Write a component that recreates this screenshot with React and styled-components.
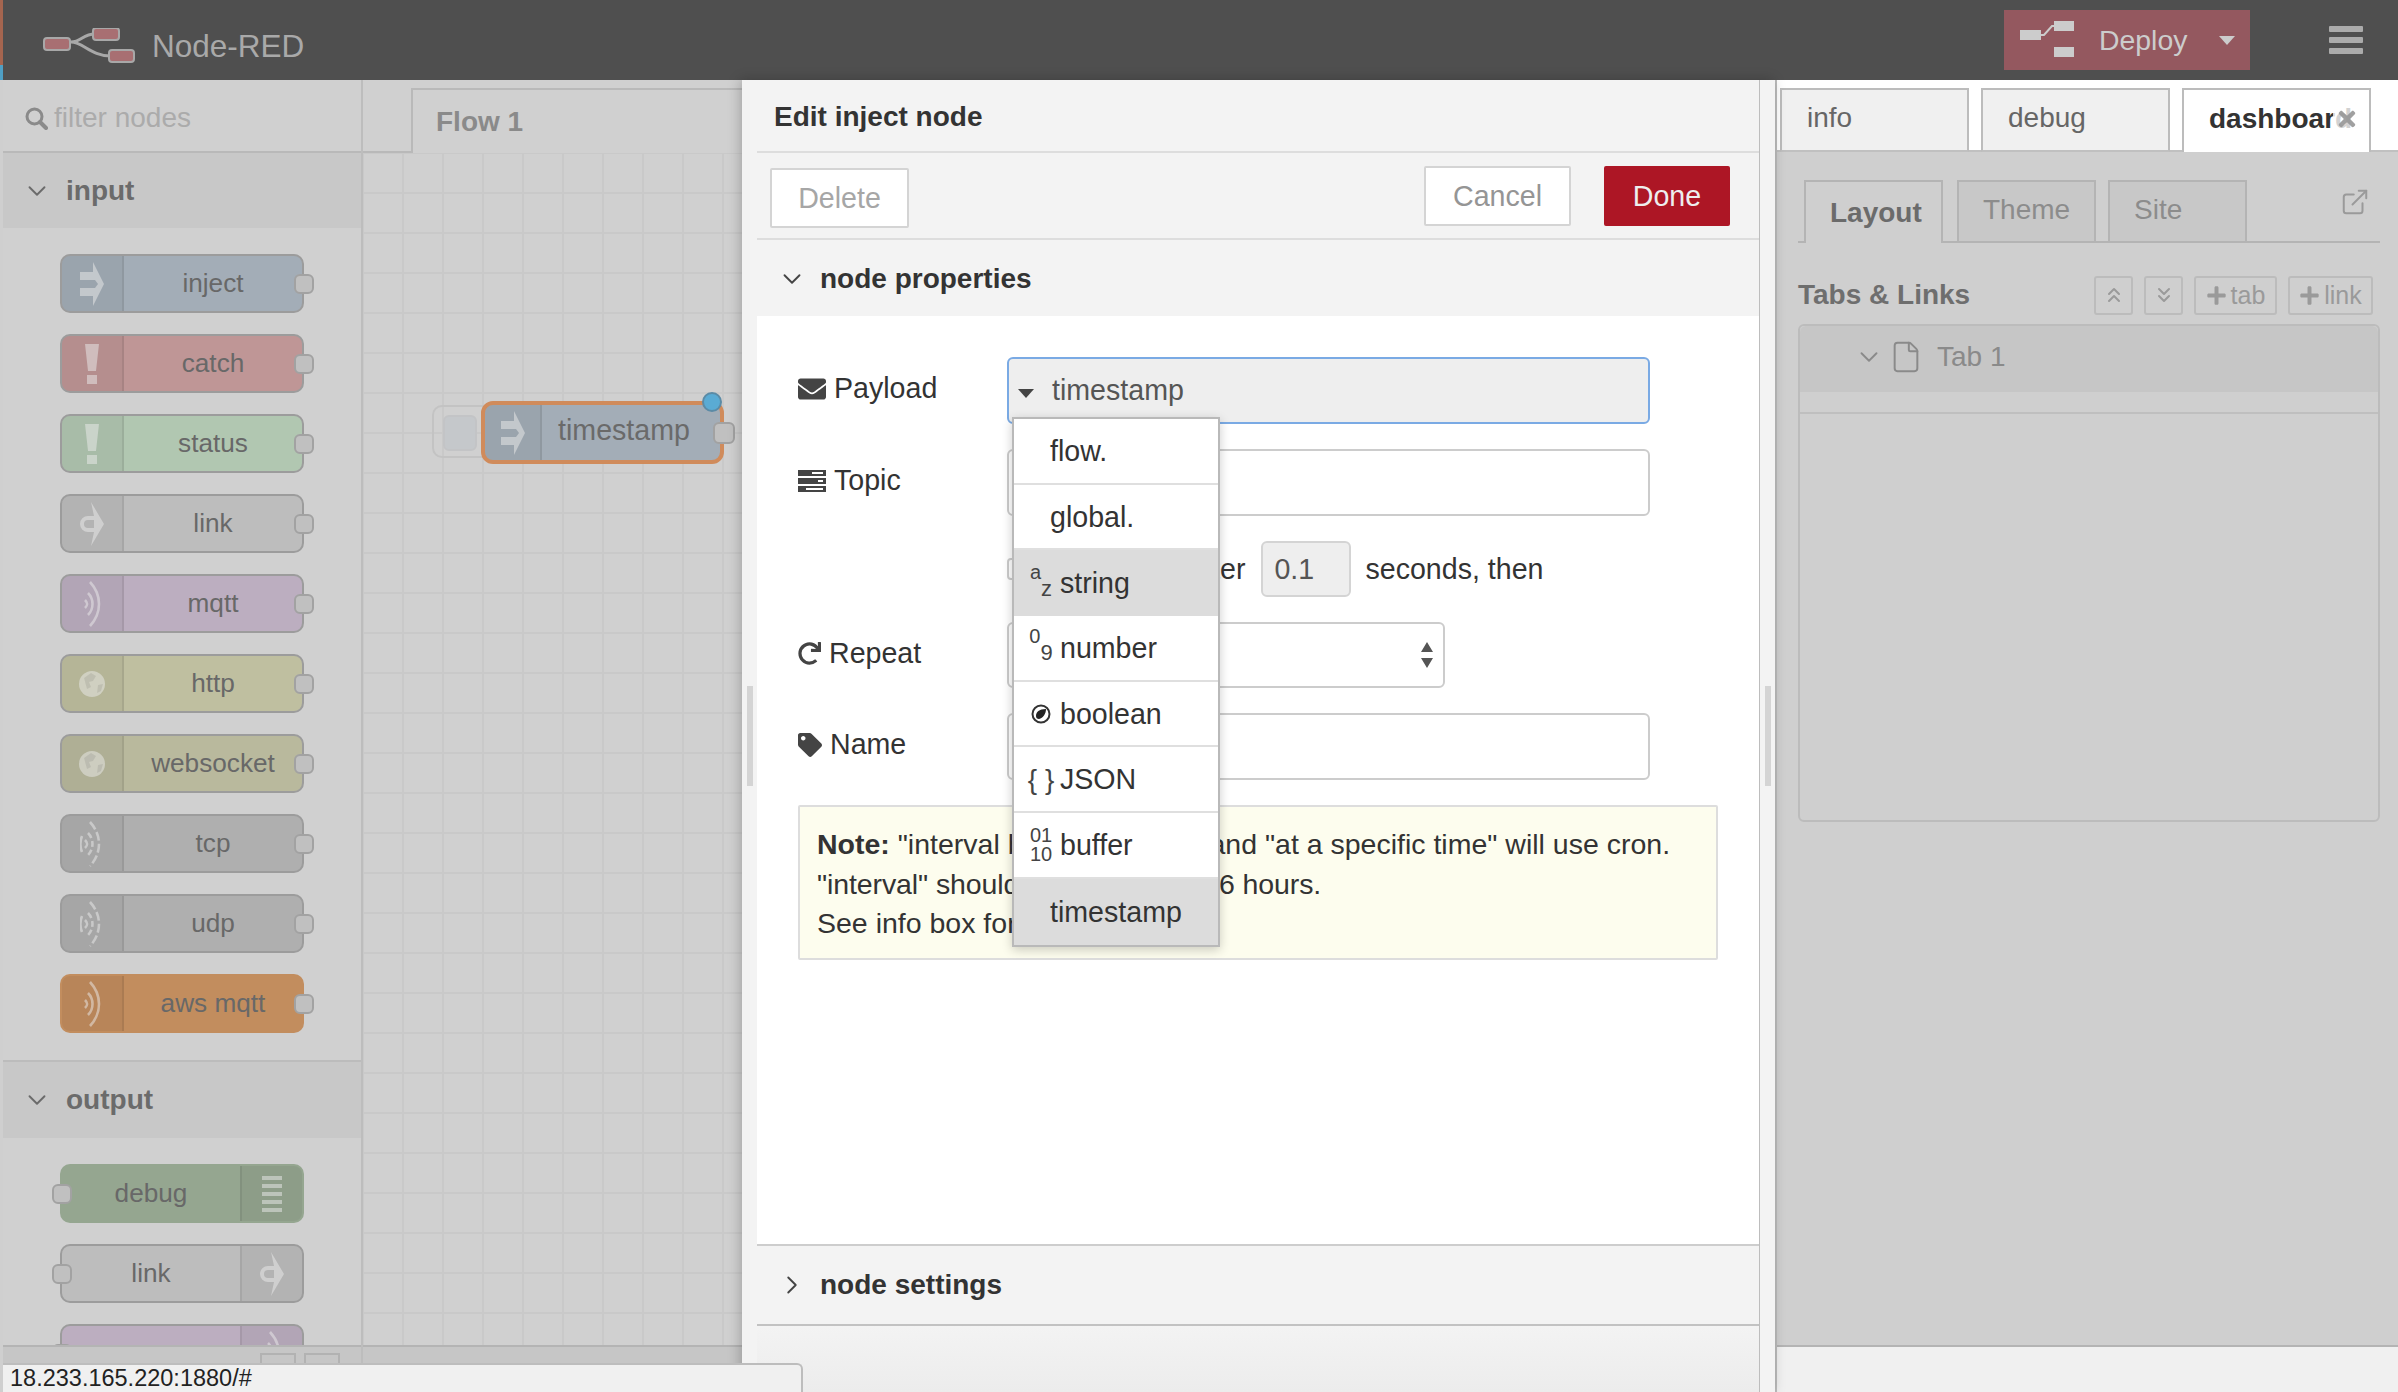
import React from 'react';
import styled, { createGlobalStyle } from 'styled-components';
import { ChevronDown, ChevronRight, ChevronsUp, ChevronsDown, ExternalLink, File } from 'lucide-react';
import { FaEnvelope, FaRedo, FaTag, FaPlus, FaTimes } from 'react-icons/fa';

const GlobalStyle = createGlobalStyle`
  html, body {
    margin: 0;
    padding: 0;
    height: 100%;
    overflow: hidden;
    background: #f3f3f3;
    font-family: "Liberation Sans", Arial, sans-serif;
  }
  * { box-sizing: border-box; }
`;

const Page = styled.div`
  position: relative;
  display: flex;
  width: 2398px;
  height: 1392px;
  overflow: hidden;
`;

const EdgeStrip = styled.div`
  flex: none;
  width: 3px;
  background: linear-gradient(#a5654f 0 65px, #4f9fc4 65px 80px, #cfcfcf 80px);
`;

const Main = styled.div`
  flex: 1;
  display: flex;
  flex-direction: column;
  min-width: 0;
`;

/* top bar */
const Header = styled.header`
  flex: none;
  height: 80px;
  display: flex;
  align-items: center;
  background: #4f4f4f;
  padding-left: 40px;
`;

const BrandGroup = styled.div`
  display: flex;
  align-items: center;
  margin-top: 12px;
`;

const Brand = styled.span`
  margin-left: 17px;
  font-size: 31.5px;
  color: #a9a9a9;
`;

const Deploy = styled.div`
  margin-left: auto;
  width: 246px;
  height: 60px;
  display: flex;
  align-items: center;
  padding-left: 16px;
  background: #94585f;
  color: #cccccc;
  font-size: 28.4px;
`;

const DeployLabel = styled.span`
  margin-left: 23px;
`;

const Caret = styled.span`
  margin-left: 32px;
  width: 0;
  height: 0;
  border-left: 8px solid transparent;
  border-right: 8px solid transparent;
  border-top: 9px solid #cccccc;
`;

const Burger = styled.div`
  margin: 0 35px 0 79px;
  width: 34px;
  display: flex;
  flex-direction: column;
  gap: 5px;
`;

const BurgerBar = styled.span`
  height: 6px;
  border-radius: 1px;
  background: #ababab;
`;

const Body = styled.div`
  flex: 1;
  display: flex;
  min-height: 0;
`;

/* left palette */
const Palette = styled.aside`
  flex: none;
  width: 360px;
  display: flex;
  flex-direction: column;
  background: #d0d0d0;
  border-right: 2px solid #bdbdbd;
`;

const FilterRow = styled.div`
  flex: none;
  height: 73px;
  display: flex;
  align-items: center;
  gap: 6px;
  padding: 5px 0 0 22px;
  border-bottom: 2px solid #b9b9b9;
  font-size: 28px;
  color: #ababab;
`;

const PaletteScroll = styled.div`
  flex: 1;
  min-height: 0;
  overflow: hidden;
`;

const CategoryHead = styled.div`
  height: 75px;
  display: flex;
  align-items: center;
  padding-left: 19px;
  gap: 14px;
  background: #c8c8c8;
  color: #6b6b6b;
  font-size: 28px;
  font-weight: bold;
  ${(p) => p.$divided && 'height: 78px; border-top: 2px solid #bcbcbc;'}
`;

const NodeList = styled.div`
  display: flex;
  flex-direction: column;
  gap: 21px;
  padding: 26px 0 27px 57px;
`;

const PaletteNode = styled.div`
  position: relative;
  width: 244px;
  height: 59px;
  display: flex;
  flex-direction: ${(p) => (p.$output ? 'row-reverse' : 'row')};
  border: 2px solid #9c9c9c;
  border-radius: 10px;
  background: ${(p) => p.$bg};
  font-size: 26.2px;
  color: #686868;
  ${(p) => p.$solid && 'border-color: transparent;'}
`;

const IconPart = styled.div`
  flex: none;
  width: 62px;
  display: flex;
  align-items: center;
  justify-content: center;
  background: rgba(0, 0, 0, 0.05);
  border-${(p) => (p.$output ? 'left' : 'right')}: 2px solid rgba(0, 0, 0, 0.08);
  border-radius: ${(p) => (p.$output ? '0 8px 8px 0' : '8px 0 0 8px')};
`;

const NodeLabel = styled.div`
  flex: 1;
  display: flex;
  align-items: center;
  justify-content: center;
`;

const Port = styled.span`
  position: absolute;
  top: 18px;
  ${(p) => (p.$left ? 'left: -10px;' : 'right: -12px;')}
  width: 20px;
  height: 20px;
  border: 2px solid #a2a2a2;
  border-radius: 6px;
  background: #c0c0c0;
`;

const PaletteFooter = styled.div`
  flex: none;
  height: 47px;
  display: flex;
  gap: 8px;
  padding: 6px 0 0 257px;
  background: #c6c6c6;
  border-top: 2px solid #b4b4b4;
`;

const FooterButton = styled.span`
  width: 36px;
  height: 12px;
  border: 2px solid #b2b2b2;
  border-bottom: none;
`;

/* workspace */
const Workspace = styled.section`
  flex: none;
  width: 379px;
  display: flex;
  flex-direction: column;
  background: #d0d0d0;
`;

const TabStrip = styled.div`
  flex: none;
  height: 73px;
  padding: 8px 0 0 48px;
  border-bottom: 2px solid #b9b9b9;
`;

const FlowTab = styled.div`
  height: 65px;
  display: flex;
  align-items: center;
  padding-left: 23px;
  border: 2px solid #b9b9b9;
  border-right: none;
  border-bottom: none;
  margin-bottom: -2px;
  background: #d0d0d0;
  font-size: 28px;
  font-weight: bold;
  color: #8a8a8a;
`;

const Canvas = styled.div`
  position: relative;
  flex: 1;
  min-height: 0;
  background-color: #d0d0d0;
  background-image: linear-gradient(#c9c9c9 2px, transparent 2px),
    linear-gradient(90deg, #c9c9c9 2px, transparent 2px);
  background-size: 40px 40px;
  background-position: 39px 39px;
`;

const WorkspaceFooter = styled.div`
  flex: none;
  height: 47px;
  background: #c6c6c6;
  border-top: 2px solid #b4b4b4;
`;

const GhostNode = styled.div`
  position: absolute;
  left: 69px;
  top: 252px;
  width: 70px;
  height: 53px;
  padding: 8px 0 0 9px;
  border: 2px solid #c3c3c3;
  border-radius: 10px 0 0 10px;
`;

const GhostButton = styled.div`
  width: 34px;
  height: 36px;
  border: 2px solid #c3c4c6;
  border-radius: 6px;
  background: #c5c8cb;
`;

const FlowNode = styled.div`
  position: absolute;
  left: 118px;
  top: 248px;
  width: 243px;
  height: 63px;
  display: flex;
  border: 4px solid #d08b5b;
  border-radius: 12px;
  background: #a3adb7;
  font-size: 28.6px;
  color: #6a6a6a;
`;

const FlowIcon = styled(IconPart)`
  width: 57px;
`;

const FlowLabel = styled(NodeLabel)`
  padding: 0 14px 4px 0;
`;

const FlowPort = styled(Port)`
  top: 17px;
  right: -15px;
  width: 22px;
  height: 22px;
`;

const ChangedDot = styled.span`
  position: absolute;
  top: -13px;
  right: -2px;
  width: 20px;
  height: 20px;
  border: 2px solid #5b8ba6;
  border-radius: 50%;
  background: #5aabd4;
`;

/* edit tray */
const Tray = styled.section`
  position: relative;
  z-index: 2;
  flex: none;
  width: 1033px;
  display: flex;
  background: #f3f3f3;
  box-shadow: -2px 0 12px rgba(0, 0, 0, 0.22);
`;

const GripStrip = styled.div`
  flex: none;
  width: ${(p) => p.$w}px;
  display: flex;
  align-items: center;
  justify-content: center;
  background: #f3f3f3;
`;

const Grip = styled.span`
  width: 6px;
  height: 100px;
  background: #d4d4d4;
`;

const TrayContent = styled.div`
  flex: 1;
  display: flex;
  flex-direction: column;
  min-width: 0;
  border-right: 1px solid #bdbdbd;
  color: #333333;
  font-size: 28.6px;
`;

const TrayTitle = styled.div`
  flex: none;
  height: 73px;
  display: flex;
  align-items: center;
  padding: 2px 0 0 17px;
  border-bottom: 2px solid #dddddd;
  font-size: 28px;
  font-weight: bold;
`;

const TrayBar = styled.div`
  flex: none;
  height: 87px;
  display: flex;
  align-items: center;
  padding: 0 29px 0 13px;
  border-bottom: 2px solid #dddddd;
`;

const Spacer = styled.div`
  flex: 1;
`;

const TrayButton = styled.div`
  width: ${(p) => p.$w}px;
  height: 60px;
  display: flex;
  align-items: center;
  justify-content: center;
  margin-left: ${(p) => p.$ml || 0}px;
  margin-top: ${(p) => p.$mt || 0}px;
  padding-top: 2px;
  border: 2px solid ${(p) => (p.$primary ? '#ad1625' : '#d4d4d4')};
  border-radius: 2px;
  background: ${(p) => (p.$primary ? '#ad1625' : '#ffffff')};
  color: ${(p) => (p.$primary ? '#eeeeee' : p.$faint ? '#a6a6a6' : '#959595')};
`;

const Section = styled.div`
  flex: none;
  height: ${(p) => p.$h}px;
  display: flex;
  align-items: center;
  gap: 13px;
  padding-left: 20px;
  padding-top: ${(p) => (p.$bottom ? 0 : 2)}px;
  font-size: 28px;
  font-weight: bold;
  ${(p) => p.$bottom && 'border-top: 2px solid #cdcdcd; border-bottom: 2px solid #c2c2c2;'}
`;

const Form = styled.div`
  flex: 1;
  display: flex;
  flex-direction: column;
  gap: 25px;
  padding: 41px 0 0 41px;
  background: #ffffff;
`;

const Row = styled.div`
  display: flex;
  align-items: center;
`;

const RowLabel = styled.label`
  flex: none;
  width: 209px;
  display: flex;
  align-items: center;
  gap: 8px;
  padding-bottom: 4px;
`;

const FieldWrap = styled.div`
  position: relative;
  z-index: 3;
`;

const TypedField = styled.div`
  width: 643px;
  height: 67px;
  display: flex;
  align-items: center;
  padding: 0 0 0 9px;
  gap: 18px;
  border: 2px solid #7aaae4;
  border-radius: 6px;
  background: #eeeeee;
  color: #555555;
`;

const FieldCaret = styled.span`
  width: 0;
  height: 0;
  margin-top: 6px;
  border-left: 8px solid transparent;
  border-right: 8px solid transparent;
  border-top: 9px solid #444444;
`;

const TextField = styled.input`
  width: 643px;
  height: 67px;
  padding: 0 14px;
  border: 2px solid #cccccc;
  border-radius: 6px;
  outline: none;
  background: #ffffff;
  font: inherit;
  color: #555555;
`;

const OnceText = styled.label`
  display: flex;
  align-items: center;
  gap: 13px;
`;

const Check = styled.span`
  width: 22px;
  height: 22px;
  border: 2px solid #cccccc;
  border-radius: 4px;
  background: #ffffff;
`;

const ShortField = styled.input`
  width: 90px;
  height: 56px;
  margin: 0 14px 0 16px;
  padding: 0 11px;
  border: 2px solid #d4d4d4;
  border-radius: 6px;
  outline: none;
  background: #eeeeee;
  font: inherit;
  color: #555555;
`;

const SelectBox = styled.div`
  width: 438px;
  height: 66px;
  display: flex;
  align-items: center;
  justify-content: space-between;
  padding: 0 9px 0 14px;
  border: 2px solid #cccccc;
  border-radius: 6px;
  background: #ffffff;
  color: #555555;
`;

const Note = styled.div`
  width: 920px;
  height: 155px;
  padding: 18px 17px 0;
  border: 2px solid #dddddd;
  border-radius: 2px;
  background: #fdfdee;
  font-size: 28.5px;
  line-height: 39.5px;
`;

const NoteTight = styled.span`
  letter-spacing: -0.1px;
`;

const TrayFooter = styled.div`
  flex: none;
  height: 66px;
  background: linear-gradient(#f3f3f3, #ececec);
`;

/* type menu */
const TypeMenu = styled.div`
  position: absolute;
  z-index: 5;
  left: 5px;
  top: 60px;
  width: 208px;
  border: 2px solid #b9b9b9;
  background: #ffffff;
  box-shadow: 0 3px 10px rgba(0, 0, 0, 0.2);
`;

const MenuItem = styled.div`
  height: 65.7px;
  display: flex;
  align-items: center;
  gap: 8px;
  padding-top: 1px;
  padding-left: ${(p) => (p.$plain ? 36 : 16)}px;
  background: ${(p) => (p.$active ? '#dcdcdc' : '#ffffff')};
  border-bottom: ${(p) => (p.$active ? 'none' : '2px solid #dfdfdf')};
  color: #333333;
  &:last-child { border-bottom: none; }
`;

const TypeGlyph = styled.span`
  flex: none;
  width: 22px;
  display: flex;
  flex-direction: ${(p) => (p.$stack ? 'column' : 'row')};
  align-items: center;
  justify-content: center;
  white-space: nowrap;
  font-size: ${(p) => p.$size || 18}px;
  line-height: ${(p) => (p.$stack ? 0.95 : 1)};
  color: #444444;
`;

const Sup = styled.span`
  align-self: flex-start;
  margin-top: -6px;
  font-size: 20px;
`;

const Sub = styled.span`
  align-self: flex-end;
  margin-top: 10px;
  font-size: 22px;
`;

/* right sidebar */
const Sidebar = styled.aside`
  flex: 1;
  min-width: 0;
  display: flex;
  flex-direction: column;
  background: #ffffff;
  border-left: 2px solid #bcbcbc;
  font-size: 28px;
`;

const SideTabs = styled.div`
  flex: none;
  height: 72px;
  display: flex;
  align-items: flex-end;
  gap: 12px;
  padding-left: 3px;
  border-bottom: 2px solid #c0c0c0;
`;

const SideTab = styled.div`
  position: relative;
  width: 189px;
  height: 64px;
  display: flex;
  align-items: center;
  padding: 0 0 4px 25px;
  margin-bottom: -2px;
  overflow: hidden;
  white-space: nowrap;
  border: 2px solid #bcbcbc;
  border-bottom: ${(p) => (p.$active ? 'none' : '2px solid #c0c0c0')};
  background: ${(p) => (p.$active ? '#ffffff' : '#f0f0f0')};
  color: ${(p) => (p.$active ? '#333333' : '#666666')};
  font-weight: ${(p) => (p.$active ? 'bold' : 'normal')};
`;

const TabClose = styled.span`
  position: absolute;
  right: 0;
  top: 0;
  bottom: 0;
  width: 36px;
  display: flex;
  align-items: center;
  padding: 0 0 4px 2px;
  background: rgba(255, 255, 255, 0.78);
  color: rgba(150, 150, 150, 0.9);
  font-size: 24px;
`;

const SidePanel = styled.div`
  flex: 1;
  min-height: 0;
  padding: 28px 18px 0 21px;
  background: #cfcfcf;
`;

const SubTabs = styled.div`
  height: 63px;
  display: flex;
  align-items: flex-end;
  padding-left: 6px;
  border-bottom: 2px solid #b4b4b4;
`;

const SubTab = styled.div`
  width: 139px;
  height: 63px;
  margin-right: ${(p) => p.$mr || 0}px;
  margin-bottom: -2px;
  display: flex;
  align-items: center;
  padding: 0 0 ${(p) => (p.$active ? 0 : 4)}px 24px;
  border: 2px solid #b4b4b4;
  border-bottom: ${(p) => (p.$active ? 'none' : '2px solid #b4b4b4')};
  background: ${(p) => (p.$active ? '#cfcfcf' : '#c8c8c8')};
  color: ${(p) => (p.$active ? '#6b6b6b' : '#8c8c8c')};
  font-weight: ${(p) => (p.$active ? 'bold' : 'normal')};
`;

const PopOut = styled.span`
  margin: 0 10px 24px auto;
  display: flex;
  color: #9a9a9a;
`;

const LinksHead = styled.div`
  height: 38px;
  margin-top: 33px;
  display: flex;
  align-items: center;
  gap: 11px;
  padding-right: 7px;
`;

const LinksTitle = styled.span`
  margin-right: auto;
  font-weight: bold;
  color: #6e6e6e;
`;

const SmallButton = styled.div`
  width: ${(p) => p.$w}px;
  height: 39px;
  display: flex;
  align-items: center;
  justify-content: center;
  gap: 4px;
  border: 2px solid #bcbcbc;
  border-radius: 3px;
  color: #9a9a9a;
  font-size: 25px;
`;

const TabsBox = styled.div`
  margin-top: 10px;
  height: 498px;
  border: 2px solid #bcbcbc;
  border-radius: 6px;
`;

const TabsRow = styled.div`
  height: 66px;
  display: flex;
  align-items: center;
  padding: 0 0 5px 54px;
  background: #c6c6c6;
  border-radius: 6px 6px 0 0;
  color: #8a8a8a;
`;

const TabsChevron = styled(ChevronDown)`
  flex: none;
`;

const TabsFile = styled(File)`
  flex: none;
  margin-left: 5px;
`;

const TabsRowName = styled.span`
  margin-left: 14px;
`;

const TabsSpacer = styled.div`
  height: 22px;
  border-bottom: 2px solid #bfbfbf;
`;

const SideFooter = styled.div`
  flex: none;
  height: 47px;
  background: #f0f0f0;
  border-top: 2px solid #b4b4b4;
`;

const StatusBubble = styled.div`
  position: absolute;
  z-index: 10;
  left: 3px;
  bottom: 0;
  width: 800px;
  height: 29px;
  padding-left: 7px;
  border-top: 2px solid #bdbdbd;
  border-right: 2px solid #bdbdbd;
  border-top-right-radius: 6px;
  background: #f0f0f0;
  font-size: 23.5px;
  line-height: 27px;
  color: #222222;
`;

/* drawings */
const Logo = () => (
  <svg width="92" height="36" viewBox="0 0 92 36">
    <path d="M28 14 C38 14 40 6 52 6 M28 14 C40 14 48 28 68 28" fill="none" stroke="#a8a8a8" strokeWidth="3" />
    <rect x="1" y="10" width="26" height="12" rx="3" fill="#a86f72" stroke="#a8a8a8" strokeWidth="2" />
    <rect x="50" y="0" width="26" height="12" rx="3" fill="#a86f72" stroke="#a8a8a8" strokeWidth="2" />
    <rect x="66" y="22" width="25" height="12" rx="3" fill="#a86f72" stroke="#a8a8a8" strokeWidth="2" />
  </svg>
);

const DeployIcon = () => (
  <svg width="56" height="38" viewBox="0 0 56 38">
    <path d="M20 14 H24 L32 5 H36" fill="none" stroke="#cccccc" strokeWidth="2" />
    <rect x="0" y="9" width="21" height="10" fill="#cccccc" />
    <rect x="34" y="0" width="20" height="10" fill="#cccccc" />
    <rect x="34" y="26" width="20" height="10" fill="#cccccc" />
  </svg>
);

const SearchIcon = () => (
  <svg width="23" height="23" viewBox="0 0 23 23">
    <circle cx="9.5" cy="9.5" r="7.5" fill="none" stroke="#8a8a8a" strokeWidth="3" />
    <path d="M15 15 L21 21" stroke="#8a8a8a" strokeWidth="4" strokeLinecap="round" />
  </svg>
);

const iconFill = 'rgba(235, 235, 235, 0.5)';

const InjectIcon = () => (
  <svg width="24" height="44" viewBox="0 0 24 44">
    <path d="M0 10h13V0l11 22-11 22V34H0v-8h15l3-4-3-4H0z" fill={iconFill} />
  </svg>
);

const AlertIcon = () => (
  <svg width="14" height="40" viewBox="0 0 14 40">
    <path d="M0 0h14l-3 27H3zM2 31h10v9H2z" fill={iconFill} />
  </svg>
);

const LinkIcon = () => (
  <svg width="24" height="44" viewBox="0 0 24 44">
    <path d="M11 0l13 22-13 22 3-14H8a8 8 0 0 1-8-8 8 8 0 0 1 8-8h6zM8 18a4 4 0 0 0 0 8h6v-8z" fill={iconFill} fillRule="evenodd" />
  </svg>
);

const BridgeIcon = ({ both }) => (
  <svg width="24" height="46" viewBox="0 0 24 46" fill="none" stroke={iconFill} strokeWidth="2.6">
    <path d="M10 1 C22 14 22 32 10 45" strokeDasharray={both ? '9 3' : undefined} />
    <path d="M8 12 C14 18 14 28 8 34" strokeDasharray={both ? '6 3' : undefined} />
    <path d="M5 19 C8 22 8 24 5 27" />
    {both && <path d="M2 15 C0 20 0 26 2 31" />}
  </svg>
);

const GlobeIcon = () => (
  <svg width="28" height="30" viewBox="0 0 28 30">
    <circle cx="14" cy="15" r="13" fill={iconFill} />
    <path d="M6 9 l7-5 5 3-3 5-4 1 2 5-4 2zM20 16l5-1-2 7-4 2z" fill="rgba(0,0,0,0.08)" />
  </svg>
);

const DebugIcon = () => (
  <svg width="20" height="36" viewBox="0 0 20 36">
    {[0, 8, 16, 24, 32].map((y) => (
      <rect key={y} x="0" y={y} width="20" height="4" fill={iconFill} />
    ))}
  </svg>
);

const TasksIcon = () => (
  <svg width="28" height="22" viewBox="0 0 28 22">
    <path d="M0 0h28v6H0zM0 8h28v6H0zM0 16h28v6H0z" fill="#444444" />
    <path d="M14 2h11v2H14zM20 10h5v2h-5zM8 18h17v2H8z" fill="#ffffff" />
  </svg>
);

const BoolIcon = () => (
  <svg width="20" height="20" viewBox="0 0 20 20">
    <circle cx="10" cy="10" r="8.5" fill="none" stroke="#333333" strokeWidth="2" />
    <path d="M5 12 C5 8 8 5 15 5 C15 10 12 14 8 15 C6 15 5 14 5 12z" fill="#222222" />
  </svg>
);

const SpinArrows = () => (
  <svg width="14" height="26" viewBox="0 0 14 26">
    <path d="M7 0l6 10H1zM7 26l-6-10h12z" fill="#555555" />
  </svg>
);

const inputNodes = [
  { label: 'inject', bg: '#a3adb7', icon: <InjectIcon /> },
  { label: 'catch', bg: '#bf9696', icon: <AlertIcon /> },
  { label: 'status', bg: '#b1c7b1', icon: <AlertIcon /> },
  { label: 'link', bg: '#bdbdbd', icon: <LinkIcon /> },
  { label: 'mqtt', bg: '#bcaec0', icon: <BridgeIcon /> },
  { label: 'http', bg: '#bfbfa0', icon: <GlobeIcon /> },
  { label: 'websocket', bg: '#b9b99d', icon: <GlobeIcon /> },
  { label: 'tcp', bg: '#afafaf', icon: <BridgeIcon both /> },
  { label: 'udp', bg: '#afafaf', icon: <BridgeIcon both /> },
  { label: 'aws mqtt', bg: '#c28d5e', icon: <BridgeIcon />, solid: true },
];

const outputNodes = [
  { id: 'debug', label: 'debug', bg: '#95a690', icon: <DebugIcon />, solid: true },
  { id: 'link', label: 'link', bg: '#bdbdbd', icon: <LinkIcon /> },
  // the next node is cut by the footer before its label shows
  { id: 'cut', label: '', bg: '#bcaec0', icon: <BridgeIcon /> },
];

const App = () => (
  <Page>
    <GlobalStyle />
    <EdgeStrip />
    <Main>
      <Header>
        <BrandGroup>
          <Logo />
          <Brand>Node-RED</Brand>
        </BrandGroup>
        <Deploy>
          <DeployIcon />
          <DeployLabel>Deploy</DeployLabel>
          <Caret />
        </Deploy>
        <Burger>
          <BurgerBar />
          <BurgerBar />
          <BurgerBar />
        </Burger>
      </Header>

      <Body>
        <Palette>
          <FilterRow>
            <SearchIcon />
            filter nodes
          </FilterRow>
          <PaletteScroll>
            <CategoryHead>
              <ChevronDown size={30} strokeWidth={1.5} color="#6b6b6b" />
              input
            </CategoryHead>
            <NodeList>
              {inputNodes.map((n) => (
                <PaletteNode key={n.label} $bg={n.bg} $solid={n.solid}>
                  <IconPart>{n.icon}</IconPart>
                  <NodeLabel>{n.label}</NodeLabel>
                  <Port />
                </PaletteNode>
              ))}
            </NodeList>
            <CategoryHead $divided>
              <ChevronDown size={30} strokeWidth={1.5} color="#6b6b6b" />
              output
            </CategoryHead>
            <NodeList>
              {outputNodes.map((n) => (
                <PaletteNode key={n.id} $bg={n.bg} $solid={n.solid} $output>
                  <IconPart $output>{n.icon}</IconPart>
                  <NodeLabel>{n.label}</NodeLabel>
                  <Port $left />
                </PaletteNode>
              ))}
            </NodeList>
          </PaletteScroll>
          <PaletteFooter>
            <FooterButton />
            <FooterButton />
          </PaletteFooter>
        </Palette>

        <Workspace>
          <TabStrip>
            <FlowTab>Flow 1</FlowTab>
          </TabStrip>
          <Canvas>
            <GhostNode>
              <GhostButton />
            </GhostNode>
            <FlowNode>
              <FlowIcon>
                <InjectIcon />
              </FlowIcon>
              <FlowLabel>timestamp</FlowLabel>
              <FlowPort />
              <ChangedDot />
            </FlowNode>
          </Canvas>
          <WorkspaceFooter />
        </Workspace>

        <Tray>
          <GripStrip $w={15}>
            <Grip />
          </GripStrip>
          <TrayContent>
            <TrayTitle>Edit inject node</TrayTitle>
            <TrayBar>
              <TrayButton $w={139} $mt={4} $faint>Delete</TrayButton>
              <Spacer />
              <TrayButton $w={147}>Cancel</TrayButton>
              <TrayButton $w={126} $ml={33} $primary>Done</TrayButton>
            </TrayBar>
            <Section $h={76}>
              <ChevronDown size={30} strokeWidth={1.5} color="#444444" />
              node properties
            </Section>
            <Form>
              <Row>
                <RowLabel>
                  <FaEnvelope size={28} color="#444444" />
                  Payload
                </RowLabel>
                <FieldWrap>
                  <TypedField>
                    <FieldCaret />
                    timestamp
                  </TypedField>
                  <TypeMenu>
                    <MenuItem $plain>flow.</MenuItem>
                    <MenuItem $plain>global.</MenuItem>
                    <MenuItem $active>
                      <TypeGlyph><Sup>a</Sup><Sub>z</Sub></TypeGlyph>
                      string
                    </MenuItem>
                    <MenuItem>
                      <TypeGlyph><Sup>0</Sup><Sub>9</Sub></TypeGlyph>
                      number
                    </MenuItem>
                    <MenuItem>
                      <TypeGlyph><BoolIcon /></TypeGlyph>
                      boolean
                    </MenuItem>
                    <MenuItem>
                      <TypeGlyph $size={28}>{'{ }'}</TypeGlyph>
                      JSON
                    </MenuItem>
                    <MenuItem>
                      <TypeGlyph $stack $size={20}><span>01</span><span>10</span></TypeGlyph>
                      buffer
                    </MenuItem>
                    <MenuItem $plain $active>timestamp</MenuItem>
                  </TypeMenu>
                </FieldWrap>
              </Row>
              <Row>
                <RowLabel>
                  <TasksIcon />
                  Topic
                </RowLabel>
                <TextField readOnly defaultValue="" />
              </Row>
              <Row>
                <RowLabel />
                <OnceText>
                  <Check />
                  Inject once after
                </OnceText>
                <ShortField readOnly defaultValue="0.1" />
                seconds, then
              </Row>
              <Row>
                <RowLabel>
                  <FaRedo size={23} color="#444444" />
                  Repeat
                </RowLabel>
                <SelectBox>
                  none
                  <SpinArrows />
                </SelectBox>
              </Row>
              <Row>
                <RowLabel>
                  <FaTag size={24} color="#444444" />
                  Name
                </RowLabel>
                <TextField readOnly defaultValue="" />
              </Row>
              <Note>
                <b>Note:</b> "interval between times" and "at a specific time" will use cron.
                <br />
                <NoteTight>"interval" should be less than 596 hours.</NoteTight>
                <br />
                See info box for details.
              </Note>
            </Form>
            <Section $h={82} $bottom>
              <ChevronRight size={30} strokeWidth={1.5} color="#444444" />
              node settings
            </Section>
            <TrayFooter />
          </TrayContent>
          <GripStrip $w={15}>
            <Grip />
          </GripStrip>
        </Tray>

        <Sidebar>
          <SideTabs>
            <SideTab>info</SideTab>
            <SideTab>debug</SideTab>
            <SideTab $active>
              dashboard
              <TabClose><FaTimes /></TabClose>
            </SideTab>
          </SideTabs>
          <SidePanel>
            <SubTabs>
              <SubTab $active $mr={14}>Layout</SubTab>
              <SubTab $mr={12}>Theme</SubTab>
              <SubTab>Site</SubTab>
              <PopOut><ExternalLink size={30} strokeWidth={1.6} /></PopOut>
            </SubTabs>
            <LinksHead>
              <LinksTitle>Tabs &amp; Links</LinksTitle>
              <SmallButton $w={39}><ChevronsUp size={24} strokeWidth={2} /></SmallButton>
              <SmallButton $w={39}><ChevronsDown size={24} strokeWidth={2} /></SmallButton>
              <SmallButton $w={83}><FaPlus size={21} />tab</SmallButton>
              <SmallButton $w={85}><FaPlus size={21} />link</SmallButton>
            </LinksHead>
            <TabsBox>
              <TabsRow>
                <TabsChevron size={30} strokeWidth={1.5} color="#8a8a8a" />
                <TabsFile size={34} strokeWidth={1.4} color="#8a8a8a" />
                <TabsRowName>Tab 1</TabsRowName>
              </TabsRow>
              <TabsSpacer />
            </TabsBox>
          </SidePanel>
          <SideFooter />
        </Sidebar>
      </Body>
    </Main>
    <StatusBubble>18.233.165.220:1880/#</StatusBubble>
  </Page>
);

export default App;
